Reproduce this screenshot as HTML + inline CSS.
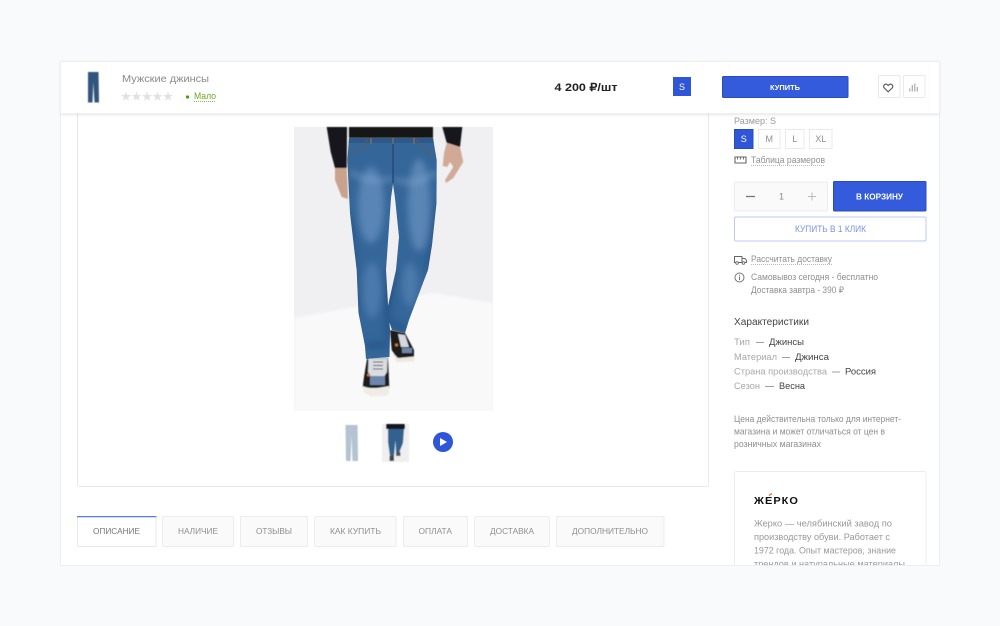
<!DOCTYPE html>
<html lang="ru"><head><meta charset="utf-8"><title>Мужские джинсы</title>
<style>
html,body{margin:0;padding:0;background:#f9fafb}
svg{display:block;filter:blur(.28px)}
text{font-family:"Liberation Sans",sans-serif;font-size:9px;fill:#8f8f8f}
.d{stroke:#a5a5a5;stroke-width:.8;stroke-dasharray:1 1;fill:none}
.b{fill:#fff;stroke:#e9e9e9;stroke-width:1}
.t{fill:#fafafa;stroke:#ececec;stroke-width:1}
.n{fill:#444}
</style></head><body>
<svg width="1000" height="626" viewBox="0 0 1000 626" xmlns="http://www.w3.org/2000/svg">
<defs>
<filter id="bl" x="-5%" y="-5%" width="110%" height="110%"><feGaussianBlur stdDeviation=".5"/></filter>
<filter id="bl3" x="-40%" y="-40%" width="180%" height="180%"><feGaussianBlur stdDeviation="3.500"/></filter>
<filter id="bl1" x="-30%" y="-30%" width="160%" height="160%"><feGaussianBlur stdDeviation="1.200"/></filter>
<filter id="sh" x="-5%" y="-30%" width="110%" height="170%"><feDropShadow dx="0" dy="1" stdDeviation="1.500" flood-color="#000" flood-opacity=".12"/></filter>
<clipPath id="card"><rect x="60" y="61" width="880" height="504"/></clipPath>
<clipPath id="jn"><path d="M349 138L433 138L436.700 160L436.500 203L432 245L428 270L423 283L409 320L405 333L392 330L388 318L388 306L396 270L399 237L395 198L393 184L391 198L386 270L388 305L390 330L389.500 357L366 359L365 346L358.500 313L356.700 270L350 213L347.300 160Z"/></clipPath>
</defs>
<rect width="1000" height="626" fill="#f9fafb"/>
<rect x="60.500" y="61.500" width="879" height="504" fill="#fff" stroke="#eeeeee"/>

<!-- main image box -->
<rect x="77.500" y="100" width="631" height="386.500" rx="2" fill="#fff" stroke="#e8e8e8"/>

<!-- photo -->
<rect x="294" y="127" width="199" height="284" fill="#f0f0f2"/>
<path d="M294 318L433 293L493 303V411H294Z" fill="#f9f9f9" filter="url(#bl1)"/>
<rect x="294" y="405" width="199" height="6" fill="#f9f9f9"/>
<rect x="288" y="411" width="210" height="6" fill="#fff"/>
<g filter="url(#bl)">
<path d="M335 168L346.700 168L347.300 180L348 199L341.700 197L335 180Z" fill="#c9a28d"/>
<path d="M446.700 143L460 147L463.300 162L453.300 178L446 183L445 180L453.300 167L450 162L447.300 167L442.700 166L444 153Z" fill="#d0aa97"/>
<path d="M326.700 127L347 127L346.700 168L335 168L330.700 152Z" fill="#17181a"/>
<path d="M442.300 127L462.300 127L460 147L446.700 142.700Z" fill="#17181a"/>
<rect x="349" y="127" width="84" height="11" fill="#141416"/>
<!-- back shoe -->
<path d="M390 330L405 333L414 350L414 358L396.700 358L391.700 350Z" fill="#1a1a1e"/>
<path d="M398 334L405 335L409 347L401 347Z" fill="#d5d9df"/>
<rect x="402" y="348" width="10" height="5" fill="#6d87aa"/>
<path d="M392 352L398 358L414 356.500L414.500 361.500L397 362Z" fill="#ece8e2"/>
<circle cx="396.500" cy="345" r="1.500" fill="#d9792e"/>
<!-- front shoe -->
<path d="M367 359L388 358L389.300 387L388.300 392L370 392L362.700 387L364 377Z" fill="#1a1a1e"/>
<path d="M368.500 359L387.500 358.500L387 372L384 377L371 377L368 372Z" fill="#d9dde2"/>
<path d="M373 362L383 362M373 365.500L383 365.500M373 369L383 369" stroke="#555" stroke-width="1"/>
<rect x="370" y="376" width="15" height="9" fill="#6d87aa"/>
<path d="M363 386Q370 390 389 386L389 394L385 396L370 396L363.500 392Z" fill="#f0ebe5"/>
<circle cx="368.500" cy="375" r="1.500" fill="#d9792e"/>
</g>
<!-- jeans -->
<g clip-path="url(#jn)">
<rect x="340" y="130" width="105" height="235" fill="#356699"/>
<g filter="url(#bl3)">
<ellipse cx="371" cy="205" rx="13" ry="38" fill="#6f9aca" opacity=".6"/>
<ellipse cx="419" cy="205" rx="11" ry="46" fill="#77a0cc" opacity=".55"/>
<ellipse cx="372" cy="290" rx="9" ry="28" fill="#5d8bbd" opacity=".55"/>
<ellipse cx="410" cy="285" rx="8" ry="22" fill="#5f8dbf" opacity=".5"/>
<path d="M350 172Q372 185 392 178M436 172Q420 186 396 180" stroke="#88aed4" stroke-width="3.500" fill="none" opacity=".6"/>
<path d="M350 215L358 313M386 270L388 340" stroke="#1f4a7c" stroke-width="4" fill="none" opacity=".8"/>
<path d="M396 270L388 306M436 203L428 270" stroke="#1f4a7c" stroke-width="4" fill="none" opacity=".7"/>
<path d="M366 345L389 345" stroke="#244f82" stroke-width="5" opacity=".8"/>
<path d="M392 322L406 330" stroke="#244f82" stroke-width="5" opacity=".8"/>
</g>
<rect x="345" y="138" width="95" height="5" fill="#2f5a88"/>
<path d="M349 149Q363 155 367 139M436 154Q420 150 417 139" stroke="#6a5a48" stroke-width=".8" fill="none"/>
<path d="M393 140V183" stroke="#274b7a" stroke-width="1.600"/>
<path d="M371 138V144M414 138V144M393 138V144" stroke="#7d6f5e" stroke-width="1.500"/>
</g>

<!-- thumbs -->
<g filter="url(#bl)">
<path d="M345.500 425H357.500L358 461H352.500L351.500 435L350.500 461H346Z" fill="#b4c2d1"/>
<rect x="382" y="424" width="27" height="38" fill="#efeff0"/>
<rect x="386" y="424" width="19" height="5" fill="#17181a"/>
<path d="M388 429H404L403 443L399 453H396L395.500 440L394 456H390L388 442Z" fill="#33608f"/>
<rect x="389.500" y="456" width="4.500" height="5" fill="#444"/><rect x="396" y="452" width="4.500" height="4" fill="#555"/>
</g>
<circle cx="443" cy="442" r="10" fill="#2f55d9"/>
<path d="M440 438V446L447 442Z" fill="#fff"/>

<!-- header strip -->
<rect x="61" y="61.500" width="878" height="52" fill="#fff" filter="url(#sh)"/>
<rect x="60.500" y="61.500" width="879" height="52" fill="#fff" stroke="#eeeeee"/>
<path d="M88 72H98.500L99 102.500H94.500L93.300 82L92.500 102.500H88Z" fill="#32547f" filter="url(#bl)"/>
<text x="122" y="82" textLength="87" lengthAdjust="spacingAndGlyphs" style="font-size:10px;fill:#8a8a8a">Мужские джинсы</text>
<g fill="#e2e2e2">
<path d="M126 91.500L127.300 95H131L128 97.200L129.100 100.800L126 98.700L122.900 100.800L124 97.200L121 95H124.700Z"/>
<path d="M136.500 91.500L137.800 95H141.500L138.500 97.200L139.600 100.800L136.500 98.700L133.400 100.800L134.500 97.200L131.500 95H135.200Z"/>
<path d="M147 91.500L148.300 95H152L149 97.200L150.100 100.800L147 98.700L143.900 100.800L145 97.200L142 95H145.700Z"/>
<path d="M157.500 91.500L158.800 95H162.500L159.500 97.200L160.600 100.800L157.500 98.700L154.400 100.800L155.500 97.200L152.500 95H156.200Z"/>
<path d="M168 91.500L169.300 95H173L170 97.200L171.100 100.800L168 98.700L164.900 100.800L166 97.200L163 95H166.700Z"/>
</g>
<circle cx="187.500" cy="97" r="1.600" fill="#4f9d0a"/>
<text x="194" y="99" textLength="22" lengthAdjust="spacingAndGlyphs" style="fill:#6aa823">Мало</text>
<path d="M194 101.500H216" stroke="#8dbd4c" stroke-width=".9" stroke-dasharray="1 1"/>
<text x="554.500" y="90.800" textLength="63" lengthAdjust="spacingAndGlyphs" style="font-size:11px;font-weight:700;fill:#222">4 200 ₽/шт</text>
<rect x="673" y="77" width="18" height="19" fill="#2f55d9"/>
<text x="682" y="90" text-anchor="middle" style="fill:#fff">S</text>
<rect x="722.500" y="76.500" width="125.500" height="21" rx="1" fill="#335bdb" stroke="#2a4cb8"/>
<text x="770" y="90" textLength="30" lengthAdjust="spacingAndGlyphs" style="font-size:7.500px;font-weight:700;fill:#fff">КУПИТЬ</text>
<rect class="b" x="878.500" y="75.500" width="21.500" height="22" rx="1"/>
<rect class="b" x="903.500" y="75.500" width="21.500" height="22" rx="1"/>
<path d="M888.200 91.800L884.300 88C882.400 85.900 885.100 83 887.300 84.700L888.200 85.500L889.100 84.700C891.300 83 894 85.900 892.100 88Z" fill="none" stroke="#5f5f5f" stroke-width="1.200"/>
<path d="M909.800 91.500V88.500M912.300 91.500V85M914.800 91.500V83.500M917.300 91.500V87" stroke="#aaaaaa" stroke-width="1.200"/>

<!-- right column -->
<text x="734" y="124" textLength="42" lengthAdjust="spacingAndGlyphs" style="fill:#9a9a9a">Размер: S</text>
<rect x="734.500" y="129.500" width="18.500" height="19" fill="#2f55d9" stroke="#2a4cb8"/>
<text x="743.700" y="142" text-anchor="middle" style="fill:#fff">S</text>
<rect class="b" x="758.500" y="129.500" width="21.500" height="19"/>
<text x="769.300" y="142" text-anchor="middle">M</text>
<rect class="b" x="785.500" y="129.500" width="18.500" height="19"/>
<text x="794.700" y="142" text-anchor="middle">L</text>
<rect class="b" x="809.500" y="129.500" width="22.500" height="19"/>
<text x="820.700" y="142" text-anchor="middle">XL</text>
<path d="M735 157H746V163H735Z" fill="none" stroke="#666" stroke-width="1.100"/><path d="M737.500 157V159.500M740.500 157V159.500M743.500 157V159.500" stroke="#666" stroke-width=".9"/>
<text x="751" y="163" textLength="74" lengthAdjust="spacingAndGlyphs">Таблица размеров</text>
<path class="d" d="M751 165.500H825"/>

<rect x="734.500" y="182" width="93" height="29" rx="1" fill="#fafafa" stroke="#ececec"/>
<path d="M746 196.500H755" stroke="#777" stroke-width="1.300"/>
<text x="779" y="199.500" style="fill:#888">1</text>
<path d="M808 196.500H816M812 192.500V200.500" stroke="#bbb" stroke-width="1"/>
<rect x="833.500" y="181.500" width="92.500" height="29.500" rx="1" fill="#335bdb" stroke="#2a4cb8"/>
<text x="856" y="199.500" textLength="47" lengthAdjust="spacingAndGlyphs" style="font-size:8.500px;font-weight:700;fill:#fff">В КОРЗИНУ</text>
<rect x="734.500" y="217" width="191.500" height="24" rx="1.500" fill="#fff" stroke="#bccbf2"/>
<text x="795" y="232" textLength="71" lengthAdjust="spacingAndGlyphs" style="fill:#7d92e0">КУПИТЬ В 1 КЛИК</text>

<path d="M734.500 256.500H742V262.500H734.500ZM742 258.500H745L746.500 260.500V262.500H742Z" fill="none" stroke="#666" stroke-width="1"/>
<circle cx="737" cy="263" r="1.300" fill="#fff" stroke="#666" stroke-width=".8"/><circle cx="743.500" cy="263" r="1.300" fill="#fff" stroke="#666" stroke-width=".8"/>
<text x="751" y="262" textLength="81" lengthAdjust="spacingAndGlyphs">Рассчитать доставку</text>
<path class="d" d="M751 264.500H832"/>
<circle cx="739.500" cy="277.500" r="4.500" fill="none" stroke="#777" stroke-width="1"/>
<path d="M739.500 276.500V280M739.500 274.800V275.800" stroke="#777" stroke-width="1"/>
<text x="751" y="280" textLength="127" lengthAdjust="spacingAndGlyphs">Самовывоз сегодня - бесплатно</text>
<text x="751" y="293" textLength="93" lengthAdjust="spacingAndGlyphs">Доставка завтра - 390 ₽</text>

<text x="734" y="325" textLength="75" lengthAdjust="spacingAndGlyphs" style="font-size:10px;fill:#444">Характеристики</text>
<text x="734" y="345" textLength="16" lengthAdjust="spacingAndGlyphs" style="fill:#a8a8a8">Тип</text>
<path d="M756 342.500H764" stroke="#888" stroke-width=".8"/>
<text class="n" x="769" y="345" textLength="35" lengthAdjust="spacingAndGlyphs">Джинсы</text>
<text x="734" y="360" textLength="43" lengthAdjust="spacingAndGlyphs" style="fill:#a8a8a8">Материал</text>
<path d="M782 357.500H790" stroke="#888" stroke-width=".8"/>
<text class="n" x="795" y="360" textLength="34" lengthAdjust="spacingAndGlyphs">Джинса</text>
<text x="734" y="374.500" textLength="93" lengthAdjust="spacingAndGlyphs" style="fill:#a8a8a8">Страна производства</text>
<path d="M832 372H840" stroke="#888" stroke-width=".8"/>
<text class="n" x="845" y="374.500" textLength="31" lengthAdjust="spacingAndGlyphs">Россия</text>
<text x="734" y="389" textLength="26" lengthAdjust="spacingAndGlyphs" style="fill:#a8a8a8">Сезон</text>
<path d="M765 386.500H774" stroke="#888" stroke-width=".8"/>
<text class="n" x="779" y="389" textLength="26" lengthAdjust="spacingAndGlyphs">Весна</text>

<text x="734" y="422" textLength="167" lengthAdjust="spacingAndGlyphs">Цена действительна только для интернет-</text>
<text x="734" y="434.500" textLength="151" lengthAdjust="spacingAndGlyphs">магазина и может отличаться от цен в</text>
<text x="734" y="447" textLength="87" lengthAdjust="spacingAndGlyphs">розничных магазинах</text>

<g clip-path="url(#card)">
<rect x="734.500" y="471.500" width="191.500" height="110" rx="2" fill="#fff" stroke="#ececec"/>
<text x="754" y="504" textLength="45" lengthAdjust="spacingAndGlyphs" style="font-size:10.500px;font-weight:700;fill:#111;letter-spacing:1px">ЖЕРКО</text>
<path d="M769 495.500L772 493.500" stroke="#d9682e" stroke-width="1.200"/>
<text x="754" y="526.500" textLength="138" lengthAdjust="spacingAndGlyphs" style="font-size:9.500px;fill:#999">Жерко — челябинский завод по</text>
<text x="754" y="540" textLength="136" lengthAdjust="spacingAndGlyphs" style="font-size:9.500px;fill:#999">производству обуви. Работает с</text>
<text x="754" y="553.500" textLength="142" lengthAdjust="spacingAndGlyphs" style="font-size:9.500px;fill:#999">1972 года. Опыт мастеров, знание</text>
<text x="754" y="567" textLength="151" lengthAdjust="spacingAndGlyphs" style="font-size:9.500px;fill:#999">трендов и натуральные материалы</text>
</g>

<!-- tabs -->
<rect class="b" x="77.500" y="516.500" width="78.500" height="30" rx="1"/>
<rect x="77" y="516" width="79.500" height="1.300" fill="#5c7de3"/>
<rect class="t" x="162.500" y="516.500" width="71" height="30" rx="1"/>
<rect class="t" x="240.500" y="516.500" width="67" height="30" rx="1"/>
<rect class="t" x="314.500" y="516.500" width="81.500" height="30" rx="1"/>
<rect class="t" x="403.500" y="516.500" width="64" height="30" rx="1"/>
<rect class="t" x="474.500" y="516.500" width="75" height="30" rx="1"/>
<rect class="t" x="556.500" y="516.500" width="107.500" height="30" rx="1"/>
<text x="93" y="534" textLength="47" lengthAdjust="spacingAndGlyphs" style="font-size:8.500px;fill:#777">ОПИСАНИЕ</text>
<text x="178" y="534" textLength="40" lengthAdjust="spacingAndGlyphs" style="font-size:8.500px">НАЛИЧИЕ</text>
<text x="256" y="534" textLength="36" lengthAdjust="spacingAndGlyphs" style="font-size:8.500px">ОТЗЫВЫ</text>
<text x="330" y="534" textLength="51" lengthAdjust="spacingAndGlyphs" style="font-size:8.500px">КАК КУПИТЬ</text>
<text x="418.500" y="534" textLength="33.500" lengthAdjust="spacingAndGlyphs" style="font-size:8.500px">ОПЛАТА</text>
<text x="490" y="534" textLength="44" lengthAdjust="spacingAndGlyphs" style="font-size:8.500px">ДОСТАВКА</text>
<text x="572" y="534" textLength="76" lengthAdjust="spacingAndGlyphs" style="font-size:8.500px">ДОПОЛНИТЕЛЬНО</text>
</svg>
</body></html>
